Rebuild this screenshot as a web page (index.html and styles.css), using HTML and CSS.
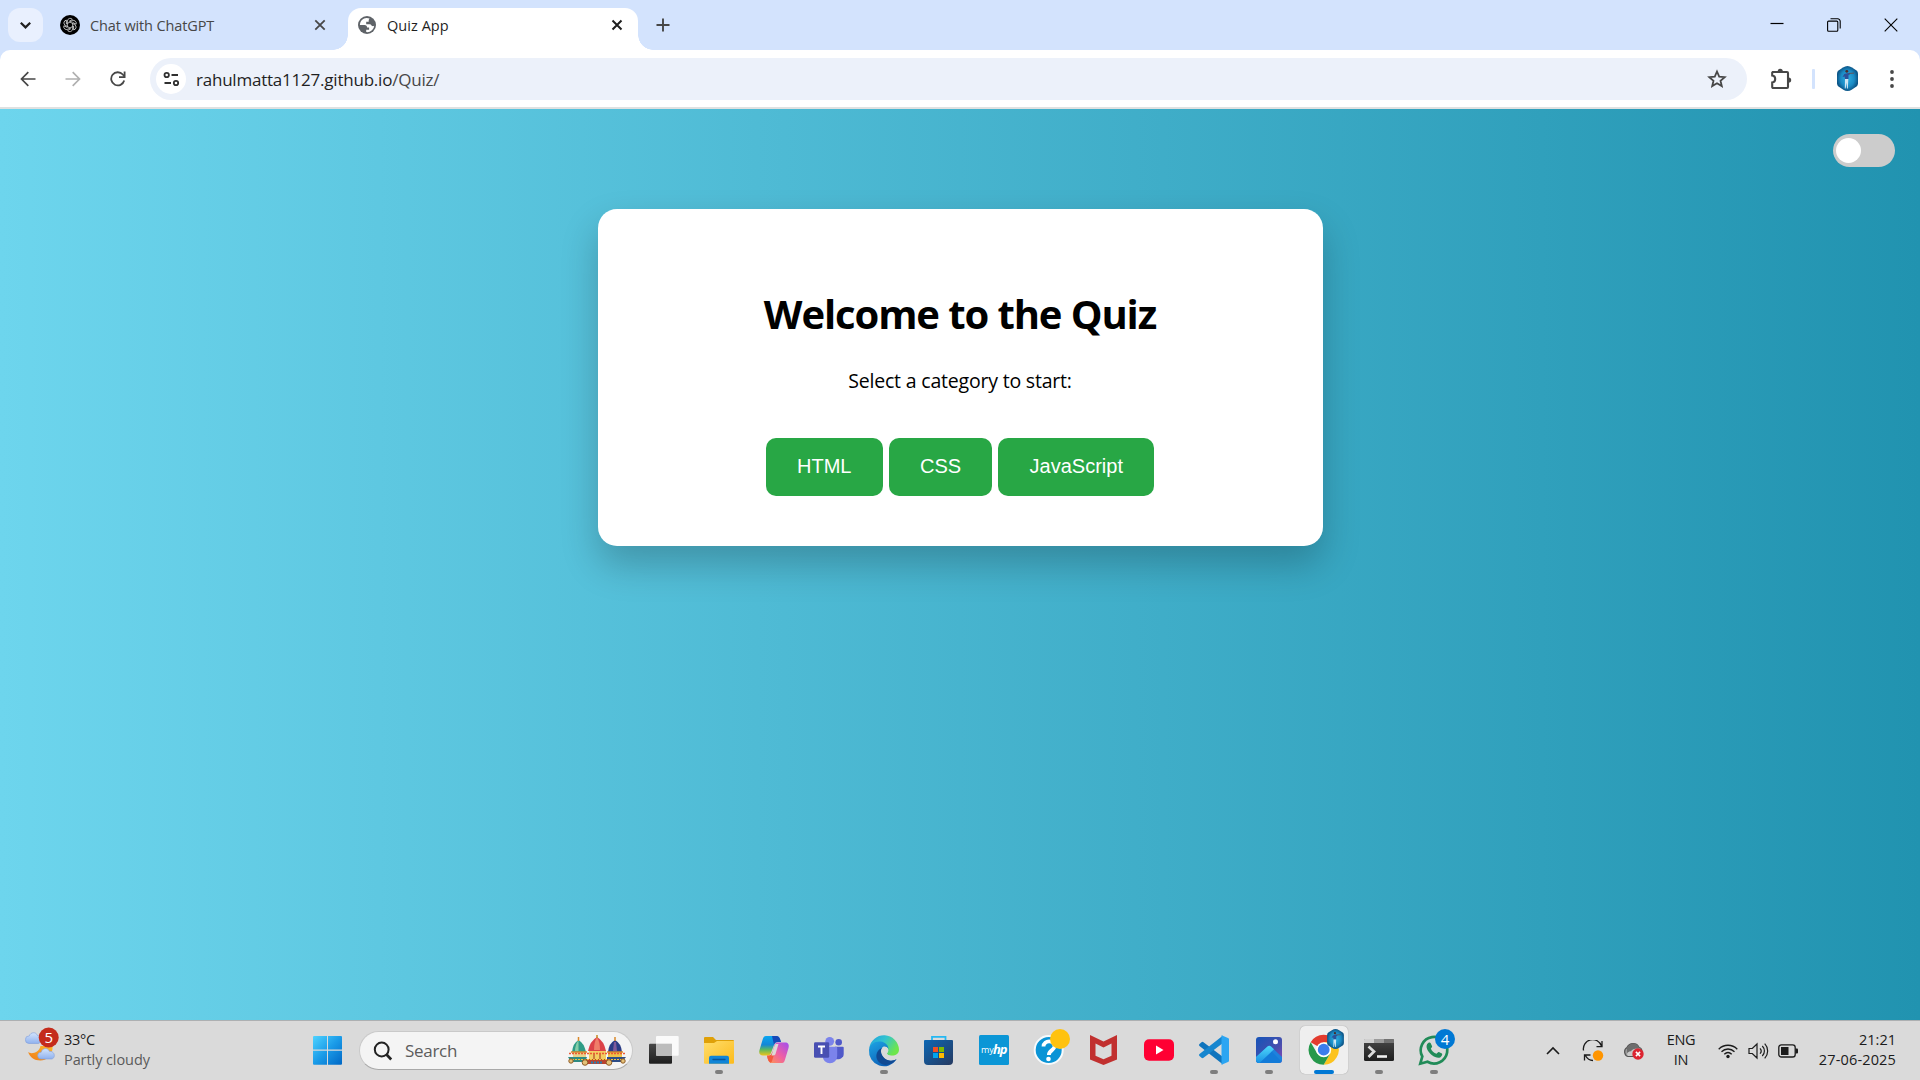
FILE: index.html
```html
<!DOCTYPE html>
<html lang="en">
<head>
<meta charset="utf-8">
<title>Quiz App</title>
<link rel="stylesheet" href="styles.css">
</head>
<body>
<svg class="defs" width="0" height="0" aria-hidden="true">
  <defs>
    <radialGradient id="gAv"><stop offset="0" stop-color="#2fb0e2"/><stop offset=".65" stop-color="#1a8ac4"/><stop offset="1" stop-color="#0d5688"/></radialGradient>
    <linearGradient id="gWin" x1="0" y1="0" x2="1" y2="1"><stop offset="0" stop-color="#4fd3ff"/><stop offset=".5" stop-color="#1a9be8"/><stop offset="1" stop-color="#0067c5"/></linearGradient>
    <linearGradient id="gCloud" x1="0" y1="0" x2="0" y2="1"><stop offset="0" stop-color="#d3e4fc"/><stop offset="1" stop-color="#8fb1ee"/></linearGradient>
    <linearGradient id="gMoon" x1="0" y1="1" x2="1" y2="0"><stop offset="0" stop-color="#ee7b18"/><stop offset="1" stop-color="#ffb92c"/></linearGradient>
    <linearGradient id="gDark" x1="0" y1="0" x2="0" y2="1"><stop offset="0" stop-color="#484848"/><stop offset="1" stop-color="#1e1e1e"/></linearGradient>
    <linearGradient id="gFold" x1="0" y1="0" x2="1" y2="1"><stop offset="0" stop-color="#ffdd6b"/><stop offset="1" stop-color="#fcbb1c"/></linearGradient>
    <linearGradient id="gCop1" x1="0" y1="0" x2="0" y2="1"><stop offset="0" stop-color="#0aa6f0"/><stop offset=".45" stop-color="#1386d8"/><stop offset=".7" stop-color="#5cb860"/><stop offset="1" stop-color="#f0c419"/></linearGradient>
    <linearGradient id="gCop2" x1="1" y1="0" x2="0" y2="1"><stop offset="0" stop-color="#a04df0"/><stop offset=".5" stop-color="#ee5fa5"/><stop offset="1" stop-color="#ff9b4a"/></linearGradient>
    <linearGradient id="gEdge1" x1="0" y1="0" x2="1" y2=".5"><stop offset="0" stop-color="#1d9fe0"/><stop offset=".5" stop-color="#33c3d0"/><stop offset="1" stop-color="#6de64b"/></linearGradient>
    <linearGradient id="gEdge2" x1="0" y1="0" x2=".6" y2="1"><stop offset="0" stop-color="#1ea5e4"/><stop offset="1" stop-color="#0b5db5"/></linearGradient>
    <linearGradient id="gStore" x1="0" y1="0" x2="1" y2="1"><stop offset="0" stop-color="#0c67b4"/><stop offset="1" stop-color="#263960"/></linearGradient>
    <linearGradient id="gPhoto" x1="0" y1="0" x2="1" y2="1"><stop offset="0" stop-color="#1554b8"/><stop offset=".6" stop-color="#464fae"/><stop offset="1" stop-color="#8a48b5"/></linearGradient>
    <linearGradient id="gPhoto2" x1="0" y1="0" x2="0" y2="1"><stop offset="0" stop-color="#50d8fa"/><stop offset="1" stop-color="#1890e4"/></linearGradient>
    <symbol id="avatar" viewBox="0 0 21 25">
      <path d="M6 1.500Q10.500-1.500 15 1.500L19.500 4.500Q21 5.500 21 7.500V17.500Q21 19.500 19.500 20.500L15 23.500Q10.500 26.500 6 23.500L1.500 20.500Q0 19.500 0 17.500V7.500Q0 5.500 1.500 4.500z" fill="url(#gAv)"/>
      <path d="M7.300 8l3.700-1 2 .2v1l-1.500.8V13H8l-.4-2.500L5.500 11z" fill="#2b519a"/>
      <path d="M12 7.400l5-.3" stroke="#6b4a48" stroke-width=".9"/>
      <circle cx="9.800" cy="5.300" r="1.400" fill="#4c2c28"/>
      <path d="M8 13h3.300l-.4 9.500h-.9l-.4-6-1 6h-.8z" fill="#cfe6f4"/>
    </symbol>
  </defs>
</svg>
<div class="window">
  <header class="tabstrip">
    <div class="tab-search"><svg width="35" height="34" viewBox="0 0 35 34"><path d="M12.800 14.800l4.700 4.600 4.700-4.600" fill="none" stroke="#1f1f1f" stroke-width="2.200"/></svg></div>
    <div class="tab">
      <svg width="20" height="20" viewBox="0 0 20 20"><circle cx="10" cy="10" r="10" fill="#000"/><g fill="none" stroke="#e0e0e0" stroke-width=".75"><path id="petal" d="M7.400 11.500V6a2.800 2.800 0 0 1 5-1.600L8.900 6.500"/><use href="#petal" transform="rotate(60 10 10)"/><use href="#petal" transform="rotate(120 10 10)"/><use href="#petal" transform="rotate(180 10 10)"/><use href="#petal" transform="rotate(240 10 10)"/><use href="#petal" transform="rotate(300 10 10)"/></g></svg>
      <span class="tab-title t1">Chat with ChatGPT</span>
      <svg class="tab-close" width="12" height="12" viewBox="0 0 12 12"><path d="M1.300 1.300l9.400 9.400M10.700 1.300l-9.400 9.400" stroke="#474747" stroke-width="1.800"/></svg>
    </div>
    <div class="tab active">
      <svg width="18" height="18" viewBox="0 0 18 18"><circle cx="9" cy="9" r="9" fill="#5f6368"/><path d="M8.600 1.900C5 2 2 5 1.900 9h4.600c1.700 0 2.600 1 2.600 2.600h2v2.200H8.200v2.300c4 .6 7.600-2.400 8-6.300-1 .6-2 .4-2.700-.4-.5-1-1.300-1.300-2.600-1.200H8.200V5.800h2.500V4.300c0-1 .6-1.500 1-1.800a8 8 0 0 0-3.100-.6z" fill="#fff"/></svg>
      <span class="tab-title t2">Quiz App</span>
      <svg class="tab-close" width="12" height="12" viewBox="0 0 12 12"><path d="M1.500 1.500l9 9M10.500 1.500l-9 9" stroke="#1f1f1f" stroke-width="2"/></svg>
    </div>
    <svg class="newtab" width="14" height="14" viewBox="0 0 14 14"><path d="M7 .5v13M.5 7h13" stroke="#474747" stroke-width="1.900"/></svg>
    <div class="caption">
      <svg width="14" height="14" viewBox="0 0 14 14"><path d="M.5 5.500h13" stroke="#000" stroke-width="1.200"/></svg>
      <svg width="14" height="14" viewBox="0 0 14 14"><rect x=".6" y="3.100" width="10.200" height="10.200" rx="1" fill="none" stroke="#000" stroke-width="1.100"/><path d="M3.500.8h7.200a2.500 2.500 0 0 1 2.500 2.500v7.200" fill="none" stroke="#000" stroke-width="1.100"/></svg>
      <svg width="14" height="14" viewBox="0 0 14 14"><path d="M.7.7l12.600 12.600M13.300.7L.7 13.300" stroke="#000" stroke-width="1.100"/></svg>
    </div>
  </header>
  <nav class="toolbar">
    <svg class="nav" width="16" height="16" viewBox="0 0 16 16"><path d="M15.500 8H2M8.300 1.200L1.500 8l6.800 6.800" fill="none" stroke="#474747" stroke-width="1.700"/></svg>
    <svg class="nav" width="16" height="16" viewBox="0 0 16 16"><path d="M.5 8H14M7.700 1.200L14.500 8l-6.800 6.800" fill="none" stroke="#b0b0b0" stroke-width="1.700"/></svg>
    <svg class="nav" width="16" height="16" viewBox="0 0 16 16"><path d="M14.200 9.500A6.600 6.600 0 1 1 12.800 3.500L14.500 5.500" fill="none" stroke="#474747" stroke-width="1.800"/><path d="M14.600.5v5.700H9" fill="none" stroke="#474747" stroke-width="1.800"/></svg>
    <div class="omnibox">
      <div class="site"><svg width="17" height="16" viewBox="0 0 17 16"><g fill="none" stroke="#303030" stroke-width="1.800"><circle cx="3.700" cy="4" r="2.200"/><path d="M8.500 4h6.500M1.500 12h6.500"/><circle cx="13" cy="12" r="2.200"/></g></svg></div>
      <span class="url">rahulmatta1127.github.io<span class="path">/Quiz/</span></span>
      <svg class="star" width="20" height="20" viewBox="0 0 20 20"><path d="M10 2.500l2.200 5.100 5.500.5-4.200 3.600 1.300 5.400L10 14.200l-4.800 2.900 1.300-5.400-4.200-3.600 5.500-.5z" fill="none" stroke="#474747" stroke-width="1.800"/></svg>
    </div>
    <svg class="ext" width="22" height="22" viewBox="0 0 22 22"><path d="M2.700 4H17a1 1 0 0 1 1 1v14a1 1 0 0 1-1 1H3.200a1 1 0 0 1-1-1v-4.500c4-.4 4-6.600 0-7V4.600z" fill="none" stroke="#474747" stroke-width="2.100"/><path d="M7.600 3.300a2.600 2.600 0 0 1 5.200 0zM18.600 9.400a2.600 2.600 0 0 1 0 5.200z" fill="#474747"/></svg>
    <i class="divider"></i>
    <svg class="profile" width="21" height="25"><use href="#avatar"/></svg>
    <svg class="menu" width="4" height="18" viewBox="0 0 4 18"><g fill="#474747"><circle cx="2" cy="2" r="1.900"/><circle cx="2" cy="9" r="1.900"/><circle cx="2" cy="16" r="1.900"/></g></svg>
  </nav>
  <main class="page">
    <div class="switch"><i></i></div>
    <section class="card">
      <h1>Welcome to the Quiz</h1>
      <p>Select a category to start:</p>
      <div class="choices"><button>HTML</button><button>CSS</button><button>JavaScript</button></div>
    </section>
  </main>
  <footer class="taskbar">
    <div class="weather">
      <svg width="36" height="40" viewBox="0 0 36 40"><path d="M3 25c3 2.500 11 1 12.500-6h12v3c-1 7-6 11.500-12 11.500C9 33.500 5 30 3 25z" fill="url(#gMoon)"/><path d="M4 16.500a3.800 3.800 0 0 1 .3-7.600C5.500 5 11 4.500 12.500 8.500c4 0 4.500 8 .5 8z" fill="url(#gCloud)" stroke="#7f9edb" stroke-width=".6"/><path d="M16 32a3.400 3.400 0 0 1 .2-6.800c1-4.200 6.500-5 8.300-.8 5.500-.6 6.500 7.100 2 7.600z" fill="url(#gCloud)" stroke="#7f9edb" stroke-width=".6"/><circle cx="23.700" cy="10.500" r="10" fill="#c42b1c"/><text x="23.700" y="16" class="badge">5</text></svg>
      <div class="two-line"><span>33°C</span><span class="muted">Partly cloudy</span></div>
    </div>
    <div class="apps">
      <svg class="start" width="48" height="48" viewBox="0 0 48 48"><path d="M11 10H24v13.500H10V11a1 1 0 0 1 1-1zM25 10H38a1 1 0 0 1 1 1v12.500H25zM10 24.700H24v14H11a1 1 0 0 1-1-1zM25 24.700H39v13a1 1 0 0 1-1 1H25z" fill="url(#gWin)"/></svg>
      <div class="search">
        <svg width="20" height="20" viewBox="0 0 20 20"><circle cx="8.700" cy="8.500" r="6.900" fill="none" stroke="#222" stroke-width="2"/><path d="M13.500 13.500l4.700 5" stroke="#222" stroke-width="2.600"/></svg>
        <span>Search</span>
        <svg class="chariots" width="62" height="32" viewBox="0 0 62 32">
          <g><path d="M7 17h13v7H7z" fill="#ead28a"/><path d="M6 17Q7 8 12.500 5 18 8 20 17z" fill="#2f9c86"/><path d="M9 16Q9 10 12.500 5q0 6 0 11z" fill="#85cda8"/><path d="M12.500 2v4M5 17h16" stroke="#d9892b" stroke-width="1.500"/><path d="M2 22h19l-2 5H5z" fill="#2f8b83"/></g>
          <g><path d="M42 17h14v7H42z" fill="#ecc24a"/><path d="M42 17Q43 8 49 5 55 8 56 17z" fill="#2b3c85"/><path d="M48 7h2l1 9h-4z" fill="#805a9a"/><path d="M49 2v4M41 17h16" stroke="#d9892b" stroke-width="1.500"/><path d="M41 22h19l-4 5H41z" fill="#2d4d87"/></g>
          <g><path d="M23 15h17v11H23z" fill="#f2cd62"/><path d="M22 16Q24 6 31 2 38 6 40 16z" fill="#dc4148"/><path d="M28 15Q28 7 31 2 34 7 34 15z" fill="#ef7d69"/><path d="M31-1v4" stroke="#c58b22" stroke-width="1.500"/><path d="M19 24h24l-3 5H22z" fill="#b9432f"/><path d="M27 18h2v6h-2zM33 18h2v6h-2z" fill="#cc7b3d"/></g>
          <path d="M3 18.500h56" stroke="#ec5a32" stroke-width="1.500" stroke-dasharray="2 1"/><path d="M3 24.500h56" stroke="#f3c33e" stroke-dasharray="2 1"/>
          <g fill="#e4c178" stroke="#8e5a24"><circle cx="5" cy="26" r="2.200"/><circle cx="19" cy="27.500" r="2.800"/><circle cx="43" cy="27.500" r="2.800"/><circle cx="57" cy="26" r="2.200"/></g><path d="M25 27.500h12" stroke="#287eb0" stroke-width="2" stroke-dasharray="2 1"/>
        </svg>
      </div>
      <div class="app"><svg width="48" height="48" viewBox="0 0 48 48"><rect x="9" y="17.700" width="23" height="20" rx="1" fill="url(#gDark)"/><rect x="16" y="10" width="22.700" height="19.700" rx="1" fill="#fff" opacity=".85"/><path d="M16 17.700h16v12H17a1 1 0 0 1-1-1z" fill="#bcbcbc"/></svg></div>
      <div class="app run"><svg width="48" height="48" viewBox="0 0 48 48"><path d="M9 20v-8a1 1 0 0 1 1-1h8l3 3h17a1 1 0 0 1 1 1v5z" fill="#dfa008"/><path d="M9 17h10l3-2h17v21.700a1 1 0 0 1-1 1H10a1 1 0 0 1-1-1z" fill="url(#gFold)"/><path d="M14 37.700v-6a2 2 0 0 1 2-2h16a2 2 0 0 1 2 2v6z" fill="#1185d7"/><path d="M18 33.500h12" stroke="#08549a" stroke-width="1.300" stroke-linecap="round"/></svg></div>
      <div class="app"><svg width="48" height="48" viewBox="0 0 48 48"><path d="M16 10h10c3 0 4 3 5 6h-3c-2.500 0-3.500 1-4.200 3.500L21 27c-.8 2.200-2 2.500-4 2.500h-4c-3 0-4.500-2-3.500-5.500l3-10c.8-2.500 1.500-4 3.500-4z" fill="url(#gCop1)"/><path d="M22 10h5c2 0 3 2 4 6h-3c-2.500 0-3.500 1-4 3z" fill="#1649b8"/><path d="M32 37H22c-3 0-4-3-5-7 3 0 4.500-.5 5.300-3.500L24.500 19c.7-2 2-2.500 4-2.500H35c3 0 4.500 2 3.500 5.500l-3 10c-.8 3-1.500 5-3.500 5z" fill="url(#gCop2)"/><path d="M17 29.500c3 0 4.500-.5 5.300-3.500l2.200 1-2.500 8c-.5 1.500-1 2-2 1.500-1.500-1-2.300-3-3-7z" fill="#f35b3d"/><path d="M25.500 18h3l-3 10c-.4 1.400-1.300 1.500-4 1.500 1-3 2-8 4-11.500z" fill="#ded9d8"/></svg></div>
      <div class="app"><svg width="48" height="48" viewBox="0 0 48 48"><circle cx="33.700" cy="16.300" r="3.300" fill="#5059c9"/><circle cx="24.700" cy="15.300" r="4.400" fill="#7b83eb"/><path d="M30 20.700h7.700a1 1 0 0 1 1 1V28c0 4-4 6-8.700 5z" fill="#5059c9"/><path d="M17.700 20.700H31a1.200 1.200 0 0 1 1.200 1.200V30a7.200 7.200 0 0 1-14.500 0z" fill="#7b83eb"/><rect x="9" y="16.300" width="15.200" height="15.500" rx="1.400" fill="#484fb2"/><path d="M13 20.500h7M16.500 20.500V28" stroke="#fff" stroke-width="1.900"/></svg></div>
      <div class="app run"><svg width="48" height="48" viewBox="0 0 48 48"><path d="M9.200 22A15 15 0 0 1 39 23.500c0 4-3 6.200-7 6.200-3.500 0-5.500-1.500-5-2.500 3-3 0-7.500-5-8.700-5-1.200-9.500 0-12.800 3.500z" fill="url(#gEdge1)"/><path d="M9 24c.5-6 6-9 11.500-8.500 5 .5 8 4 8 7.500-2-3-5-3-6.500-1-3 4 0 11 7 12.500 3 .6 5.500 0 7.600-1.200A15 15 0 0 1 9 24z" fill="url(#gEdge2)"/><path d="M21.800 22c-2.300 4 .5 10.800 7.200 12.500 3 .7 5.500 0 7.600-1.200-3 4-7 5.700-11.200 5.700-7-.5-10.500-7-8.500-12 1-2.600 3-4.500 4.900-5z" fill="#114a93"/><path d="M21.500 24.500a3.600 3.600 0 0 1 6.300-2.300c1.200 2 .2 4-.8 5 0 1.500 2 2.800 6 2.500-3 2.500-11 1-11.500-5.200z" fill="#dadada"/></svg></div>
      <div class="app"><svg width="48" height="48" viewBox="0 0 48 48"><path d="M17 15v-4.200h13.500V15" fill="none" stroke="#25b8f2" stroke-width="1.800"/><path d="M9 15a1 1 0 0 1 1-1h27a1 1 0 0 1 1 1v20a4 4 0 0 1-4 4H13a4 4 0 0 1-4-4z" fill="url(#gStore)"/><path fill="#f25022" d="M18 21h5v5h-5z"/><path fill="#7fba00" d="M24 21h5v5h-5z"/><path fill="#00a4ef" d="M18 27h5v5h-5z"/><path fill="#ffb900" d="M24 27h5v5h-5z"/></svg></div>
      <div class="app"><svg width="48" height="48" viewBox="0 0 48 48"><rect x="9" y="9" width="30" height="30" rx="1.500" fill="#0b96d6"/><text x="11" y="27" class="my">my</text><text x="23" y="28" class="hp">hp</text></svg></div>
      <div class="app"><svg width="48" height="48" viewBox="0 0 48 48"><circle cx="23.700" cy="24" r="14" fill="#0a94d6" stroke="#f7fafc" stroke-width="2"/><path d="M18.500 20.500c0-7 11.500-6.500 11 0-.4 4-5.800 4-5.600 8.500" fill="none" stroke="#fff" stroke-width="3.800"/><circle cx="23.500" cy="33" r="2.300" fill="#fff"/><circle cx="35" cy="13" r="10" fill="#ffc20e"/></svg></div>
      <div class="app"><svg width="48" height="48" viewBox="0 0 48 48"><path d="M10 9l13.500 6.500L37 9v24.500L23.500 39 10 33.500zM15.500 17.500v12.300l8 3.400 8-3.400V17.500l-8 4z" fill="#c1302f" fill-rule="evenodd"/></svg></div>
      <div class="app"><svg width="48" height="48" viewBox="0 0 48 48"><rect x="9" y="13.200" width="30" height="21.600" rx="5" fill="#ff0033"/><path d="M21 19.500l7.500 4.500-7.500 4.500z" fill="#fff"/></svg></div>
      <div class="app run"><svg width="48" height="48" viewBox="0 0 48 48"><path d="M9.500 18l2-1.800a1.500 1.500 0 0 1 2 0L33 31v7.500L9.500 20a1.300 1.300 0 0 1 0-2z" fill="#0f74bd"/><path d="M9.500 30l2 1.800a1.500 1.500 0 0 0 2 0L33 17V9.500L9.500 28a1.300 1.300 0 0 0 0 2z" fill="#1686cf"/><path d="M31.500 9.200L38 12a1.500 1.500 0 0 1 1 1.500v21a1.500 1.500 0 0 1-1 1.500l-6.500 2.800z" fill="#2ba5f2"/></svg></div>
      <div class="app run"><svg width="48" height="48" viewBox="0 0 48 48"><rect x="11" y="11" width="26" height="26" rx="3" fill="url(#gPhoto)"/><circle cx="30.500" cy="15.700" r="2.500" fill="#fff"/><path d="M11 31l11.500-10.500a2.500 2.500 0 0 1 3.500 0L37 31v3a3 3 0 0 1-3 3H14a3 3 0 0 1-3-3z" fill="#1d82dd"/><path d="M12 36l11-11.500a2 2 0 0 1 2.700 0L36 35a3 3 0 0 1-2 2H14a3 3 0 0 1-2-1z" fill="#137bd8"/><path d="M11 31l11.500-10.500a2.500 2.500 0 0 1 3.500 0l3 2.800L14.500 37A3.500 3.500 0 0 1 11 33.500z" fill="url(#gPhoto2)"/></svg></div>
      <div class="app run current"><svg width="48" height="48" viewBox="0 0 48 48"><path d="M23.700 23.700L10.700 16.200A15 15 0 0 1 36.700 16.200H23.700z" fill="#e33b2e"/><path d="M23.700 16.200H36.700a15 15 0 0 1-13 22.500l6.500-11.200z" fill="#fcc31e"/><path d="M30.200 27.500l-6.500 11.200a15 15 0 0 1-13-22.500l6.500 11.300z" fill="#26984b"/><circle cx="23.700" cy="23.700" r="7.500" fill="#fff"/><circle cx="23.700" cy="23.700" r="5.900" fill="#3c7ded"/><use href="#avatar" x="26" y="3" width="19" height="20"/></svg></div>
      <div class="app run"><svg width="48" height="48" viewBox="0 0 48 48"><rect x="9" y="13" width="30" height="22" rx="1.500" fill="url(#gDark)"/><path d="M10 13h9v4H9v-3a1 1 0 0 1 1-1z" fill="#d0d0d0"/><path d="M19 13h10v4H19z" fill="#9b9b9b"/><path d="M29 13h9a1 1 0 0 1 1 1v3H29z" fill="#717171"/><path d="M13.500 20.500l5.500 5-5.500 5.500" fill="none" stroke="#dcdcdc" stroke-width="2.700"/><path d="M22 30.500h10" stroke="#eee" stroke-width="2.600"/></svg></div>
      <div class="app run"><svg width="48" height="48" viewBox="0 0 48 48"><path d="M10.300 37.700l2-7.200A13.300 13.300 0 1 1 17.500 35.800z" fill="none" stroke="#218b58" stroke-width="2.700"/><path d="M18.500 16.800c.8-.6 1.800-.5 2.200.4l1.400 3c.3.800-1 1.900-1.300 2.300.8 2.300 3.200 4.500 5.700 5.300.7-.6 1.600-2 2.400-1.700l3 1.500c.9.600-.1 3-1.400 3.600-2.300 1.300-5.500.2-8.800-2.200-3.500-2.800-7.800-8.900-3.200-12.200z" fill="#218b58"/><circle cx="35" cy="13" r="10" fill="#0078d4"/><text x="35" y="18.500" class="badge">4</text></svg></div>
    </div>
    <div class="tray">
      <svg class="chev" width="14" height="10" viewBox="0 0 14 10"><path d="M1 8l6-6 6 6" fill="none" stroke="#1b1b1b" stroke-width="1.600"/></svg>
      <svg class="sync" width="22" height="22" viewBox="0 0 22 22"><path d="M1.500 10.500A9.300 9.300 0 0 1 19.500 6M20 1v5.700h-5.500M11 20.500c-3 0-6-2-7.600-5M2.500 20.500v-5.500h6" fill="none" stroke="#1b1b1b" stroke-width="1.300"/><circle cx="16" cy="15.500" r="5.200" fill="#ff9500"/></svg>
      <svg class="cloud" width="22" height="18" viewBox="0 0 22 18"><path d="M5 14.500A5 5 0 0 1 4 5.500C6 .5 14 0 16 5.500c4 .5 4 8 0 9z" fill="#9b9b9b" stroke="#555" stroke-width="1.200"/><path d="M4 6C7 0 14 0 16 5.500l-4 1.500-8 4z" fill="#6d6d6d"/><path d="M5 14c-2-2 0-5 3-4.500 2-4 7-3 8-1v5.500z" fill="#c9c9c9"/><circle cx="15" cy="12" r="5.700" fill="#dc2430"/><path d="M12.900 9.900l4.200 4.200m0-4.200l-4.200 4.200" stroke="#fff" stroke-width="1.500"/></svg>
      <div class="two-line lang"><span>ENG</span><span>IN</span></div>
      <svg class="wifi" width="20" height="16" viewBox="0 0 20 16"><g fill="none" stroke="#1b1b1b" stroke-width="1.300"><path d="M.7 6.200c5.200-5.300 13.400-5.300 18.600 0M3.500 8.700c3.700-3.600 9.300-3.600 13 0M6.300 11.300c2.300-2.200 5.100-2.200 7.400 0"/></g><circle cx="10" cy="13.500" r="1.700" fill="#1b1b1b"/></svg>
      <svg class="vol" width="21" height="18" viewBox="0 0 21 18"><path d="M1 6.500h3.300L9 2v14l-4.700-4.500H1zM12 6.300a4 4 0 0 1 0 5.400M14.300 4a7 7 0 0 1 0 10M16.700 1.700a10.500 10.500 0 0 1 0 14.600" fill="none" stroke="#1b1b1b" stroke-width="1.200"/></svg>
      <svg class="bat" width="21" height="14" viewBox="0 0 21 14"><rect x=".8" y=".8" width="16.400" height="12.200" rx="2.600" fill="none" stroke="#1b1b1b" stroke-width="1.300"/><path d="M3 3h7.500v8H3z" fill="#1b1b1b"/><path d="M17.500 4.500h1.500a1 1 0 0 1 1 1v3a1 1 0 0 1-1 1h-1.500z" fill="#1b1b1b"/></svg>
      <div class="two-line clock"><span>21:21</span><span class="date">27-06-2025</span></div>
    </div>
  </footer>
</div>
</body>
</html>
```
FILE: styles.css
```css
* { box-sizing: border-box; }
body { margin: 0; font-family: "Open Sans", "Noto Sans", sans-serif; color: #1f1f1f; }
svg { display: block; flex: none; }
.defs { position: absolute; }
.window { display: flex; flex-direction: column; width: 1920px; height: 1080px; overflow: hidden; background: #d3e3fd; }

.tabstrip { display: flex; height: 50px; flex: none; padding: 8px 22px 0 8px; }
.tab-search { width: 35px; height: 34px; border-radius: 12px; background: #e9f0fe; }
.tab { display: flex; align-items: center; height: 42px; padding-bottom: 8px; }
.tab:not(.active) { width: 288px; margin-left: 17px; }
.tab:not(.active) .tab-close { margin-right: 22px; }
.tab-title { margin-left: 10px; padding-top: 1px; font-size: 14.5px; line-height: 20px; white-space: nowrap; }
.t1 { color: #474747; letter-spacing: -.12px; }
.t2 { margin-left: 11px; letter-spacing: .05px; }
.tab-close { margin-left: auto; }
.active { position: relative; width: 290px; padding: 0 15px 8px 10px; border-radius: 13px 13px 0 0; background: #fff; }
.active::before, .active::after { content: ""; position: absolute; bottom: 0; width: 15px; height: 15px; }
.active::before { left: -15px; background: radial-gradient(circle at 0 0, transparent 14.5px, #fff 15px); }
.active::after { right: -15px; background: radial-gradient(circle at 100% 0, transparent 14.5px, #fff 15px); }
.newtab { margin: 10px 0 0 18px; }
.caption { display: flex; gap: 43px; margin: 10px 0 0 auto; }

.toolbar { display: flex; align-items: center; height: 59px; flex: none; padding: 0 26px 0 20px; border-bottom: 2px solid #dfe1e1; border-radius: 10px 10px 0 0; background: #fff; }
.nav { margin-right: 29px; }
.omnibox { display: flex; align-items: center; width: 1597px; height: 42px; margin-left: -5px; padding: 0 20px 0 6px; border-radius: 21px; background: #ecf1fa; }
.site { display: grid; place-items: center; width: 30px; height: 30px; border-radius: 50%; background: #fff; }
.url { margin-left: 10px; padding-top: 2px; font-size: 17px; line-height: 24px; letter-spacing: -.22px; }
.path { color: #474747; }
.star { margin-left: auto; }
.ext { margin-left: 23px; }
.divider { width: 3px; height: 20px; margin-left: 20px; border-radius: 1px; background: #d3e3fd; }
.profile { margin-left: 22px; }
.menu { margin-left: auto; }

.page { flex: 1; display: flex; flex-direction: column; align-items: center; padding-top: 25px; background: linear-gradient(to right, #6dd5ed, #2193b0); }
.switch { align-self: flex-end; width: 62px; height: 33px; margin-right: 25px; padding: 4px 3px; border-radius: 17px; background: #ccc; }
.switch i { display: block; width: 25px; height: 25px; border-radius: 50%; background: #fff; }
.card { width: 725px; height: 337px; margin-top: 42px; padding-top: 77px; border-radius: 19px; background: #fff; text-align: center; color: #000; box-shadow: 0 18.75px 37.5px rgba(0, 0, 0, .22); }
h1 { margin: 0; font-size: 40px; line-height: 56px; letter-spacing: -1.1px; }
p { margin: 25px 0 0; font-size: 19.5px; line-height: 28px; letter-spacing: -.2px; }
.choices { display: flex; justify-content: center; gap: 6px; margin-top: 43px; }
button { height: 58px; padding: 0 31.25px 2px; border: 0; border-radius: 10px; background: #28a745; color: #fff; font: 20px "Liberation Sans", Arial, sans-serif; }

.taskbar { display: flex; flex: none; height: 60px; border-top: 1px solid #adb0b2; background: #dadada; font-size: 14.5px; color: #1b1b1b; }
.weather { display: flex; width: 303px; padding: 6px 0 0 25px; gap: 3px; }
.two-line { display: flex; flex-direction: column; padding-top: 3px; line-height: 20px; white-space: nowrap; letter-spacing: -.3px; }
.muted { color: #5a5a5a; letter-spacing: -.08px; }
.badge { font-size: 15px; fill: #fff; text-anchor: middle; }
.apps { display: flex; gap: 7px; padding-top: 5px; }
.search { display: flex; align-items: center; width: 274px; height: 39px; margin: 5px 0 0 1px; padding: 0 4px 0 13px; border: 1px solid #c9c9c9; border-bottom-color: #a9a9a9; border-radius: 20px; background: #f4f4f4; font-size: 17px; color: #5c5c5c; }
.search span { margin-left: 12px; letter-spacing: -.3px; }
.chariots { margin-left: auto; }
.app { position: relative; width: 48px; height: 48px; }
.run::after { content: ""; position: absolute; left: 20px; bottom: 0; width: 8px; height: 4px; border-radius: 2px; background: #7e7e7e; }
.current { border-radius: 5px; background: #efefef; box-shadow: 0 0 1px #888; }
.current::after { left: 14px; width: 20px; background: #0078d4; }
.my { font: 9px "Open Sans", sans-serif; fill: #fff; }
.hp { font: italic bold 13px "Open Sans", sans-serif; fill: #fff; letter-spacing: -1px; }
.tray { display: flex; align-items: center; flex: 1; margin-left: 88px; }
.sync { margin-left: 22px; }
.cloud { margin-left: 19px; }
.lang { width: 30px; margin-left: 21px; align-items: center; }
.tray .two-line { padding-bottom: 1px; padding-top: 0; }
.wifi { margin-left: 22px; }
.vol { margin-left: 10px; }
.bat { margin-left: 9px; }
.tray .clock { align-items: flex-end; margin: 0 24px 0 auto; padding-bottom: 2px; letter-spacing: 0; }
.date { letter-spacing: .15px; }
```
